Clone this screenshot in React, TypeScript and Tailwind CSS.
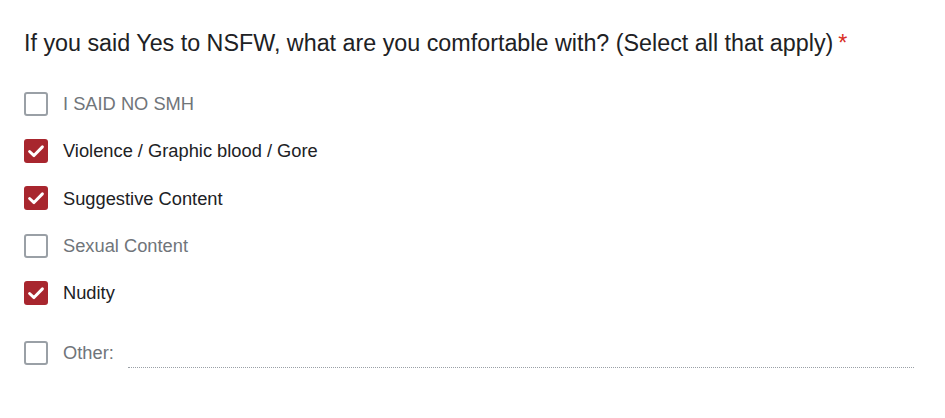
import React from "react";

function Box({ checked }: { checked: boolean }) {
  if (checked) {
    return (
      <div className="w-[24px] h-[24px] rounded-[3px] bg-[#a8262e] flex items-center justify-center shrink-0">
        <svg width="22" height="22" viewBox="0 0 24 24">
          <path d="M5 12.5 L9.8 17 L19 7.5" fill="none" stroke="white" strokeWidth="3.2" strokeLinecap="round" strokeLinejoin="round" />
        </svg>
      </div>
    );
  }
  return <div className="w-[24px] h-[24px] rounded-[3px] border-2 border-[#9aa0a6] shrink-0" />;
}

const items = [
  { label: "I SAID NO SMH", checked: false },
  { label: "Violence / Graphic blood / Gore", checked: true },
  { label: "Suggestive Content", checked: true },
  { label: "Sexual Content", checked: false },
  { label: "Nudity", checked: true },
];

export default function App() {
  return (
    <div className="w-[945px] h-[418px] bg-white pl-[24px] pr-[31px] pt-[28px]" style={{ fontFamily: "'Liberation Sans', Arial, sans-serif" }}>
      <div className="text-[23.3px] leading-[30px] text-[#202124] flex">
        <span>If you said Yes to NSFW, what are you comfortable with? (Select all that apply)</span>
        <span className="text-[#d93025] ml-[5px]">*</span>
      </div>
      <div className="mt-[22px] flex flex-col">
        {items.map((it) => (
          <div key={it.label} className="flex items-center h-[47.3px] gap-[15px]">
            <Box checked={it.checked} />
            <span className={`text-[18.3px] ${it.checked ? "text-[#202124]" : "text-[#70757a]"}`}>{it.label}</span>
          </div>
        ))}
        <div className="flex items-center h-[47px] gap-[14px] mt-[13px]">
          <Box checked={false} />
          <span className="text-[18.3px] text-[#70757a] ml-[1px]">Other:</span>
          <div className="flex-1 self-end mb-[8px] border-b border-dotted border-[#9aa0a6]" />
        </div>
      </div>
    </div>
  );
}
